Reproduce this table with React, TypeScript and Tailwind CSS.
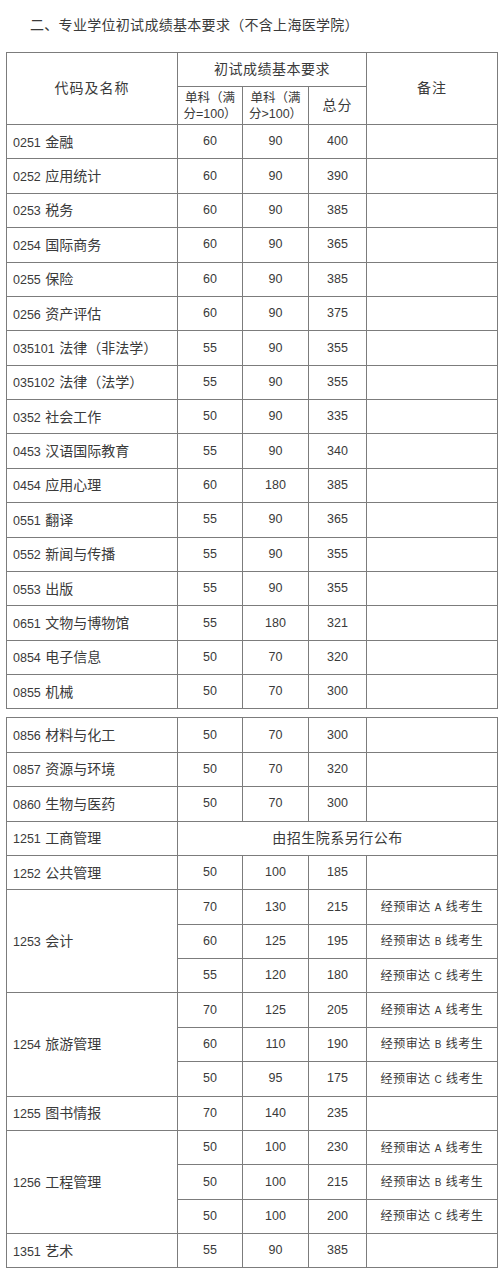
import React from "react";

type Row = {
  code: string;
  name: string;
  subs: [string, string, string, string][];
  merged?: string;
};

const table1: Row[] = [
  { code: "0251", name: "金融", subs: [["60", "90", "400", ""]] },
  { code: "0252", name: "应用统计", subs: [["60", "90", "390", ""]] },
  { code: "0253", name: "税务", subs: [["60", "90", "385", ""]] },
  { code: "0254", name: "国际商务", subs: [["60", "90", "365", ""]] },
  { code: "0255", name: "保险", subs: [["60", "90", "385", ""]] },
  { code: "0256", name: "资产评估", subs: [["60", "90", "375", ""]] },
  { code: "035101", name: "法律（非法学）", subs: [["55", "90", "355", ""]] },
  { code: "035102", name: "法律（法学）", subs: [["55", "90", "355", ""]] },
  { code: "0352", name: "社会工作", subs: [["50", "90", "335", ""]] },
  { code: "0453", name: "汉语国际教育", subs: [["55", "90", "340", ""]] },
  { code: "0454", name: "应用心理", subs: [["60", "180", "385", ""]] },
  { code: "0551", name: "翻译", subs: [["55", "90", "365", ""]] },
  { code: "0552", name: "新闻与传播", subs: [["55", "90", "355", ""]] },
  { code: "0553", name: "出版", subs: [["55", "90", "355", ""]] },
  { code: "0651", name: "文物与博物馆", subs: [["55", "180", "321", ""]] },
  { code: "0854", name: "电子信息", subs: [["50", "70", "320", ""]] },
  { code: "0855", name: "机械", subs: [["50", "70", "300", ""]] },
];

const table2: Row[] = [
  { code: "0856", name: "材料与化工", subs: [["50", "70", "300", ""]] },
  { code: "0857", name: "资源与环境", subs: [["50", "70", "320", ""]] },
  { code: "0860", name: "生物与医药", subs: [["50", "70", "300", ""]] },
  { code: "1251", name: "工商管理", subs: [], merged: "由招生院系另行公布" },
  { code: "1252", name: "公共管理", subs: [["50", "100", "185", ""]] },
  {
    code: "1253",
    name: "会计",
    subs: [
      ["70", "130", "215", "A"],
      ["60", "125", "195", "B"],
      ["55", "120", "180", "C"],
    ],
  },
  {
    code: "1254",
    name: "旅游管理",
    subs: [
      ["70", "125", "205", "A"],
      ["60", "110", "190", "B"],
      ["50", "95", "175", "C"],
    ],
  },
  { code: "1255", name: "图书情报", subs: [["70", "140", "235", ""]] },
  {
    code: "1256",
    name: "工程管理",
    subs: [
      ["50", "100", "230", "A"],
      ["50", "100", "215", "B"],
      ["50", "100", "200", "C"],
    ],
  },
  { code: "1351", name: "艺术", subs: [["55", "90", "385", ""]] },
];

const cell = "border border-[#7c7c7c] p-0 text-center align-middle";
const rowH = "h-[34.375px]";

function Cols() {
  return (
    <colgroup>
      <col className="w-[171px]" />
      <col className="w-[65px]" />
      <col className="w-[66px]" />
      <col className="w-[58px]" />
      <col className="w-[131px]" />
    </colgroup>
  );
}

function NameCell({ row, span }: { row: Row; span: number }) {
  return (
    <td rowSpan={span} className={`${cell} pl-[6px] text-left`}>
      <span className="text-[12.5px]">{row.code}</span>{" "}
      <span className="text-[14px]">{row.name}</span>
    </td>
  );
}

function Num({ v }: { v: string }) {
  return <td className={`${cell} text-[12.5px]`}>{v}</td>;
}

function Remark({ v }: { v: string }) {
  return (
    <td className={`${cell} text-[12px] tracking-[0.5px]`}>
      {v ? (
        <>
          经预审达 <span className="text-[10px]">{v}</span> 线考生
        </>
      ) : null}
    </td>
  );
}

function Body({ rows }: { rows: Row[] }) {
  return (
    <tbody>
      {rows.map((row) => {
        if (row.merged) {
          return (
            <tr key={row.code} className={rowH}>
              <NameCell row={row} span={1} />
              <td colSpan={4} className={`${cell} text-[14px] tracking-[0.5px]`}>
                {row.merged}
              </td>
            </tr>
          );
        }
        return row.subs.map((s, i) => (
          <tr key={row.code + i} className={rowH}>
            {i === 0 && <NameCell row={row} span={row.subs.length} />}
            <Num v={s[0]} />
            <Num v={s[1]} />
            <Num v={s[2]} />
            <Remark v={s[3]} />
          </tr>
        ));
      })}
    </tbody>
  );
}

export default function App() {
  return (
    <div className="min-h-[1275px] w-[500px] bg-white font-['Liberation_Sans','Noto_Sans_CJK_SC',sans-serif] text-[#3a3a3a]">
      <div className="pl-[30px] pt-[15px] text-[14px] leading-[20px] tracking-[0.3px]">
        二、专业学位初试成绩基本要求（不含上海医学院）
      </div>
      <table className="ml-[6px] mt-[17px] w-[491px] table-fixed border-collapse">
        <Cols />
        <thead>
          <tr className="h-[34px]">
            <td rowSpan={2} className={`${cell} text-[14px] tracking-[1px]`}>
              代码及名称
            </td>
            <td colSpan={3} className={`${cell} text-[14px] tracking-[0.5px]`}>
              初试成绩基本要求
            </td>
            <td rowSpan={2} className={`${cell} text-[14px] tracking-[1px]`}>
              备注
            </td>
          </tr>
          <tr className="h-[38px]">
            <td className={`${cell} text-[12.5px] leading-[16px]`}>
              单科（满
              <br />
              分=100）
            </td>
            <td className={`${cell} text-[12.5px] leading-[16px]`}>
              单科（满
              <br />
              分&gt;100）
            </td>
            <td className={`${cell} text-[14px] tracking-[1px]`}>总分</td>
          </tr>
        </thead>
        <Body rows={table1} />
      </table>
      <table className="ml-[6px] mt-[8px] w-[491px] table-fixed border-collapse">
        <Cols />
        <Body rows={table2} />
      </table>
    </div>
  );
}
